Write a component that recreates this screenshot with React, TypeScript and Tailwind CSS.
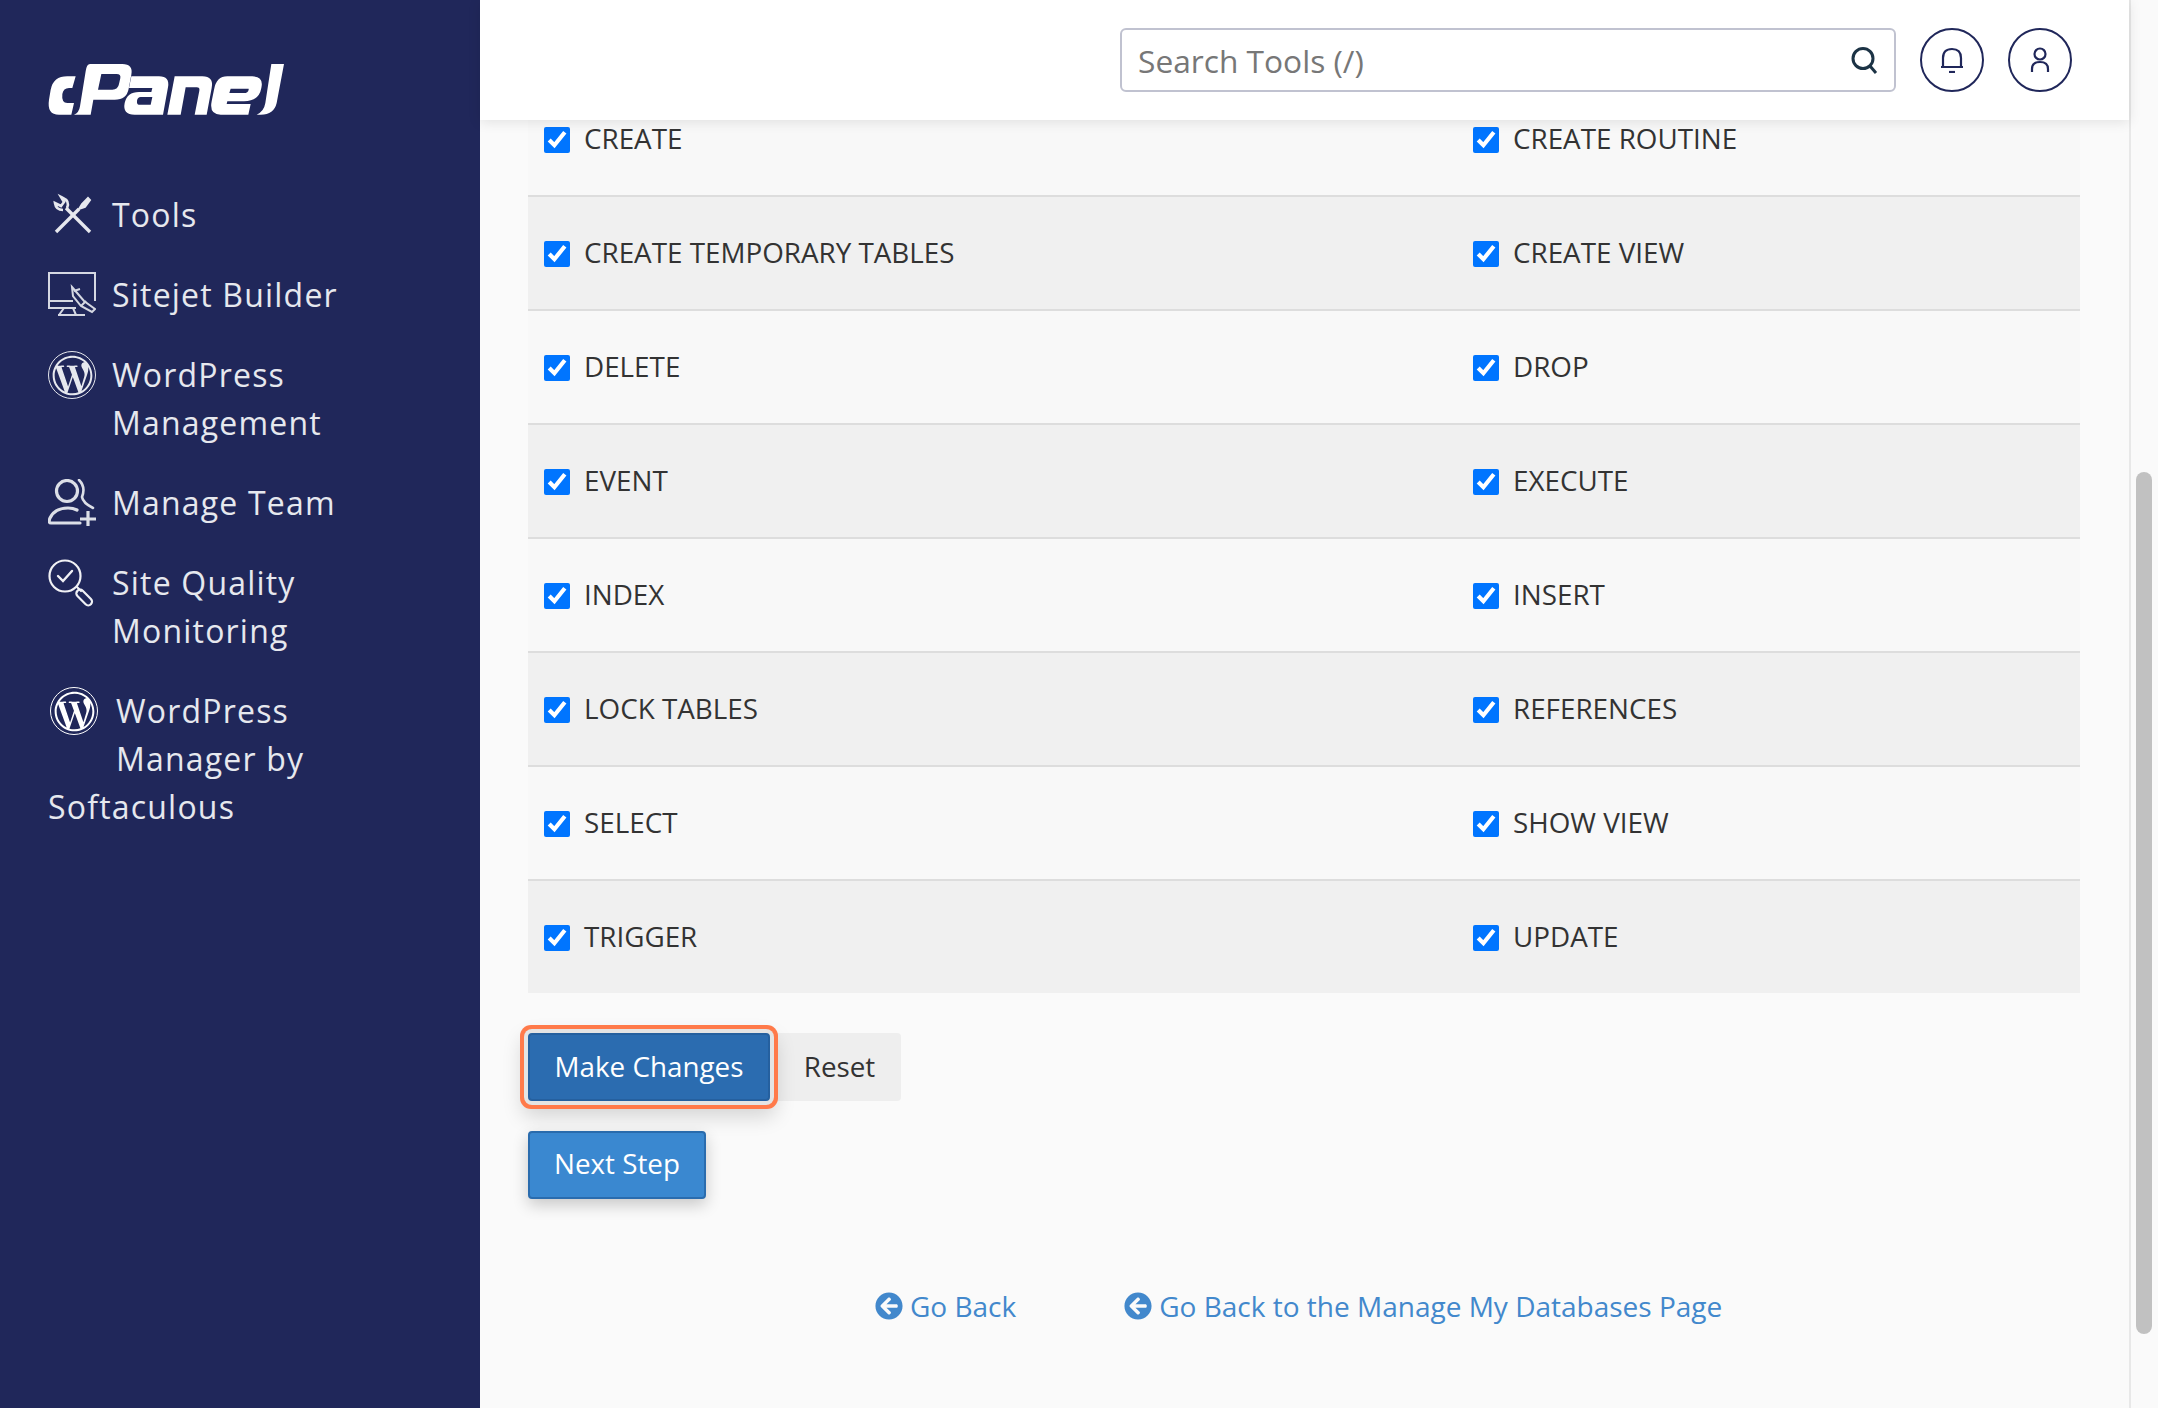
import { FaArrowCircleLeft, FaWordpressSimple } from "react-icons/fa";

const rows: [string, string][] = [
  ["CREATE", "CREATE ROUTINE"],
  ["CREATE TEMPORARY TABLES", "CREATE VIEW"],
  ["DELETE", "DROP"],
  ["EVENT", "EXECUTE"],
  ["INDEX", "INSERT"],
  ["LOCK TABLES", "REFERENCES"],
  ["SELECT", "SHOW VIEW"],
  ["TRIGGER", "UPDATE"],
];

function Logo() {
  return (
    <svg viewBox="0 0 732 186" className="w-[244px] h-[62px] block -ml-1 -mt-[6px]" fill="#fff" fillRule="evenodd">
      <path d="M95 55L85 90H75Q58 90 55 108Q52 135 70 135H90L82 170H45Q8 170 15 125L20 95Q28 55 70 55Z" />
      <path d="M138 18H235Q268 18 262 50L254 92Q248 125 212 125H148L140 170H90Q105 165 108 145L125 40Q128 18 138 18ZM172 48L162 95H205Q222 95 225 78L229 60Q231 48 218 48Z" />
      <path d="M262 55H345Q378 55 372 88L357 170H272Q235 170 242 135Q249 102 285 102H322L325 90H255ZM290 117H325L320 140H285Q278 140 279 128Q281 117 290 117Z" />
      <path d="M392 55H475Q510 55 503 90L488 170H452L466 98Q468 88 458 88H425L410 170H370Z" />
      <path d="M550 55H625Q660 55 652 90Q645 130 600 130H550L548 138H620L613 170H530Q495 170 503 130L510 95Q517 55 550 55ZM560 92L556 105H600Q612 105 614 95L614 92Z" />
      <path d="M682 18H720L698 135Q690 170 650 170H638Q660 160 664 135Z" />
    </svg>
  );
}

function ToolsIcon() {
  return (
    <svg viewBox="0 0 48 48" className="w-12 h-12 block" fill="none" stroke="#e6e8ee" strokeWidth="3.4">
      <path d="M18 17L42 41" />
      <path d="M8 41L31 18" />
      <path d="M19 17Q22 10 15 7L13 6L16 11L13 15L7 12Q8 19 15 19" strokeWidth="2.6" />
      <path d="M31 18L34 13L40 7L42 9L37 16Z" fill="#e6e8ee" strokeWidth="2" />
    </svg>
  );
}

function SitejetIcon() {
  return (
    <svg viewBox="0 0 48 48" className="w-12 h-12 block" fill="none" stroke="#d5d8e2" strokeWidth="2">
      <path d="M28 37H1V2H47V30" />
      <path d="M1 30H25" />
      <path d="M16 37L11 44M25 37L28 44M10 44H37" />
      <path d="M24 16L36 30L47 38L44 41L33 35L25 25Z" fill="#20275a" />
      <path d="M26 20L32 18M33 35L38 30" />
    </svg>
  );
}

function WpIcon({ bright }: { bright?: boolean }) {
  return (
    <span className={`w-12 h-12 rounded-full border flex items-center justify-center ${bright ? "border-white text-white" : "border-[#e6e8ee] text-[#e6e8ee]"}`}>
      <FaWordpressSimple className="w-[41px] h-[41px]" />
    </span>
  );
}

function TeamIcon() {
  return (
    <svg viewBox="0 0 48 48" className="w-12 h-12 block" fill="none" stroke="#dcdfe7" strokeWidth="3.2" strokeLinecap="round">
      <circle cx="19" cy="12" r="10.5" />
      <path d="M31 1Q38 8 34 18Q35 24 45 29" strokeWidth="2.6" />
      <path d="M32 44H3Q0 44 2 39Q7 29 20 29Q25 29 29 31" />
      <path d="M40 32V47M32 40H48" strokeLinecap="butt" />
    </svg>
  );
}

function QualityIcon() {
  return (
    <svg viewBox="0 0 48 48" className="w-12 h-12 block" fill="none" stroke="#f0f1f5" strokeWidth="2.2" strokeLinecap="round">
      <circle cx="17" cy="17" r="15.5" />
      <path d="M10 17L15 22L24 12" strokeWidth="2.4" />
      <path d="M29 28L33 32" />
      <rect x="32" y="29" width="7.5" height="19" rx="3.7" transform="rotate(-45 36 38)" />
    </svg>
  );
}

function BellIcon() {
  return (
    <svg viewBox="0 0 24 26" className="w-6 h-[26px] block" fill="none" stroke="#20275a" strokeWidth="2.2">
      <path d="M1 20H23M3 20V11Q3 2 12 2Q21 2 21 11V20" />
      <path d="M9 25H15" />
    </svg>
  );
}

function UserIcon() {
  return (
    <svg viewBox="0 0 20 26" className="w-5 h-[26px] block" fill="none" stroke="#20275a" strokeWidth="2.2">
      <circle cx="10" cy="7" r="5.5" />
      <path d="M2 25V22Q2 15 10 15Q18 15 18 22V25" />
    </svg>
  );
}

function NavItem({ icon, children, iconClass }: { icon: React.ReactNode; children: React.ReactNode; iconClass?: string }) {
  return (
    <div className="text-[32px] leading-[48px] tracking-[1.2px] text-[#e6e8ee] flow-root">
      <span className={iconClass ?? "float-left mr-4"}>{icon}</span>
      {children}
    </div>
  );
}

function Cell({ label }: { label: string }) {
  return (
    <label className="flex items-center pl-4 gap-[14px] text-[27.8px] text-[#333333]">
      <input type="checkbox" defaultChecked className="w-[26px] h-[26px] m-0 mt-[1px] accent-[#0075ff]" />
      <span>{label}</span>
    </label>
  );
}

export default function App() {
  return (
    <div className="flex h-screen w-full overflow-hidden bg-[#fafafa] font-['Open_Sans',sans-serif]">
      <aside className="w-[480px] shrink-0 bg-[#20275a] pl-12 pr-[64px] pt-16">
        <Logo />
        <nav className="mt-[71px] flex flex-col gap-8">
          <NavItem icon={<ToolsIcon />}>Tools</NavItem>
          <NavItem icon={<SitejetIcon />}>Sitejet Builder</NavItem>
          <NavItem icon={<WpIcon />} iconClass="float-left mr-4 pb-[2px]">WordPress Management</NavItem>
          <NavItem icon={<TeamIcon />}>Manage Team</NavItem>
          <NavItem icon={<QualityIcon />} iconClass="float-left mr-4 pb-[2px]">Site Quality Monitoring</NavItem>
          <NavItem icon={<WpIcon bright />} iconClass="float-left ml-[2px] mr-[18px] pb-[2px]">
            WordPress Manager by Softaculous
          </NavItem>
        </nav>
      </aside>
      <main className="flex-1 min-w-0 flex flex-col">
        <header className="relative z-10 h-[120px] shrink-0 bg-white shadow-[0_2px_12px_rgba(0,0,0,0.1)] flex items-center justify-end gap-6 pr-[57px]">
          <div className="w-[776px] h-[64px] rounded-[6px] border-2 border-[#c0c2d0] flex items-center justify-between pl-4 pr-[16px]">
            <span className="text-[31.7px] text-[#777777] pt-[2px]">Search Tools (/)</span>
            <svg viewBox="0 0 28 28" className="w-7 h-7" fill="none" stroke="#1c3345" strokeWidth="3">
              <circle cx="13" cy="12.5" r="10" />
              <path d="M20 20L26 27" />
            </svg>
          </div>
          <button className="w-16 h-16 rounded-full border-2 border-[#20275a] flex items-center justify-center bg-white">
            <BellIcon />
          </button>
          <button className="w-16 h-16 rounded-full border-2 border-[#20275a] flex items-center justify-center bg-white">
            <UserIcon />
          </button>
        </header>
        <div className="flex-1 min-h-0 overflow-hidden pl-12 pr-[49px]">
          <div className="-mt-[37px]">
            {rows.map(([a, b], i) => (
              <div
                key={a}
                className={`grid grid-cols-[929px_1fr] h-[114px] last:h-[112px] items-center border-b-2 last:border-b-0 border-[#dddddd] ${i % 2 === 0 ? "bg-[#f8f8f8]" : "bg-[#f0f0f0]"}`}
              >
                <Cell label={a} />
                <Cell label={b} />
              </div>
            ))}
          </div>
          <div className="mt-10 flex">
            <button className="relative h-[68px] w-[242px] pb-[1px] rounded-[4px] bg-[#2b6cb0] border-2 border-[#25609f] text-white text-[27.8px] shadow-[0_0_0_4px_#e4e4e4,0_0_0_8px_#ff7a4a,0_10px_20px_6px_rgba(0,0,0,0.15)] z-[1]">
              Make Changes
            </button>
            <button className="h-[68px] w-[131px] pb-[1px] pl-2 rounded-r-[4px] bg-[#eeeeee] text-[#333333] text-[27.8px]">Reset</button>
          </div>
          <button className="block mt-[30px] h-[68px] w-[178px] pb-[2px] rounded-[4px] bg-[#3a88d0] border-2 border-[#2a6cae] text-white text-[27.8px] shadow-[0_6px_16px_rgba(0,0,0,0.2)]">
            Next Step
          </button>
          <div className="mt-[87px] flex text-[#4288cc] text-[28px] leading-[40px] pl-[347px]">
            <a className="flex items-center gap-[7px]">
              <FaArrowCircleLeft className="w-7 h-7" />
              Go Back
            </a>
            <a className="flex items-center gap-[7px] ml-[108px]">
              <FaArrowCircleLeft className="w-7 h-7" />
              Go Back to the Manage My Databases Page
            </a>
          </div>
        </div>
      </main>
      <div className="w-[29px] shrink-0 border-l-2 border-[#e8e8e8] bg-[#fafafa] pt-[472px] pl-[5px]">
        <div className="w-4 h-[862px] rounded-full bg-[#c1c1c1]" />
      </div>
    </div>
  );
}
